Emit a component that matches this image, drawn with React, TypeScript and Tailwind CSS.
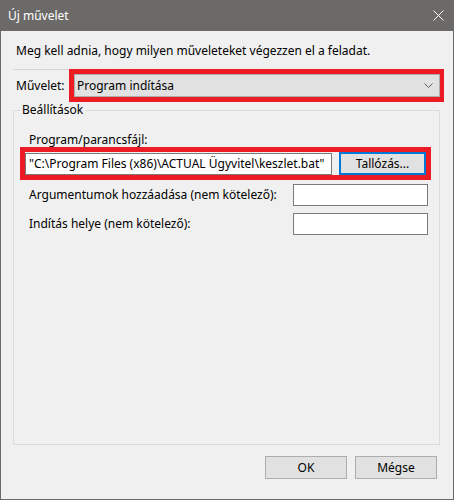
const font = { fontFamily: '"Noto Sans", "Liberation Sans", sans-serif' };

const Btn = ({ label, focused }: { label: string; focused?: boolean }) => (
  <div
    className={
      "flex items-center justify-center bg-[#e1e1e1] border text-[12px] text-black " +
      (focused ? "border-[#0078d7] border-2 h-[23px] w-[87px]" : "border-[#adadad] h-[23px] w-[82px]")
    }
  >
    {label}
  </div>
);

const App = () => {
  return (
    <div
      className="w-[454px] h-[500px] flex flex-col bg-[#f0f0f0] border-x border-b border-[#6c6a69] text-black"
      style={font}
    >
      {/* title bar */}
      <div className="h-[31px] shrink-0 bg-[#6c6a69] flex items-center justify-between pl-[8px] pr-[9px] -mx-px">
        <span className="text-[12px] text-white leading-none">Új művelet</span>
        <svg width="11" height="11" viewBox="0 0 11 11" className="mr-[1px]">
          <path d="M0.5 0.5 L10.5 10.5 M10.5 0.5 L0.5 10.5" stroke="#ffffff" strokeWidth="1" />
        </svg>
      </div>

      <div className="flex-1 flex flex-col pl-[12px] pr-[13px]">
        <p className="mt-[12px] pl-[3px] text-[12px] leading-[16px]">
          Meg kell adnia, hogy milyen műveleteket végezzen el a feladat.
        </p>

        <div className="mt-[10px] h-px bg-[#d5d5d5]" />

        {/* action row */}
        <div className="-mt-px flex items-center h-[33px]">
          <span className="w-[56px] pl-[3px] text-[12px] leading-[16px]">Művelet:</span>
          <div className="w-[375px] h-[33px] border-[5px] border-[#ed1c24] -mr-[4px]">
            <div className="h-full w-[366px] bg-[#e1e1e1] border border-[#adadad] flex items-center justify-between pl-[2px] pr-[6px]">
              <span className="text-[12px] leading-[16px]">Program indítása</span>
              <svg width="9" height="5" viewBox="0 0 9 5">
                <path d="M0.5 0.5 L4.5 4.5 L8.5 0.5" fill="none" stroke="#606060" strokeWidth="1" />
              </svg>
            </div>
          </div>
        </div>

        {/* settings group */}
        <fieldset className="flex-1 border border-[#dcdcdc] flex flex-col min-h-0">
          <legend className="ml-[6px] px-[2px] text-[12px] leading-[16px]">Beállítások</legend>

          <span className="mt-[14px] pl-[15px] text-[12px] leading-[16px]">Program/parancsfájl:</span>

          <div className="-mt-px ml-[6px] w-[411px] h-[33px] border-[5px] border-[#ed1c24] flex items-center gap-[7px]">
            <div className="w-[307px] h-[22px] bg-white border border-[#7a7a7a] flex items-center pl-[3px]">
              <span className="text-[12px] leading-[16px] whitespace-nowrap">
                "C:\Program Files (x86)\ACTUAL Ügyvitel\keszlet.bat"
              </span>
            </div>
            <Btn label="Tallózás..." focused />
          </div>

          <div className="mt-[4px] flex items-center justify-between pl-[15px] pr-[11px]">
            <span className="text-[12px] leading-[16px]">Argumentumok hozzáadása (nem kötelező):</span>
            <div className="w-[135px] h-[22px] bg-white border border-[#7a7a7a]" />
          </div>

          <div className="mt-[7px] flex items-center justify-between pl-[15px] pr-[11px]">
            <span className="text-[12px] leading-[16px]">Indítás helye (nem kötelező):</span>
            <div className="w-[135px] h-[22px] bg-white border border-[#7a7a7a]" />
          </div>
        </fieldset>

        {/* footer buttons */}
        <div className="mt-[11px] mb-[20px] mr-[3px] flex justify-end gap-[8px]">
          <Btn label="OK" />
          <Btn label="Mégse" />
        </div>
      </div>
    </div>
  );
};

export default App;
